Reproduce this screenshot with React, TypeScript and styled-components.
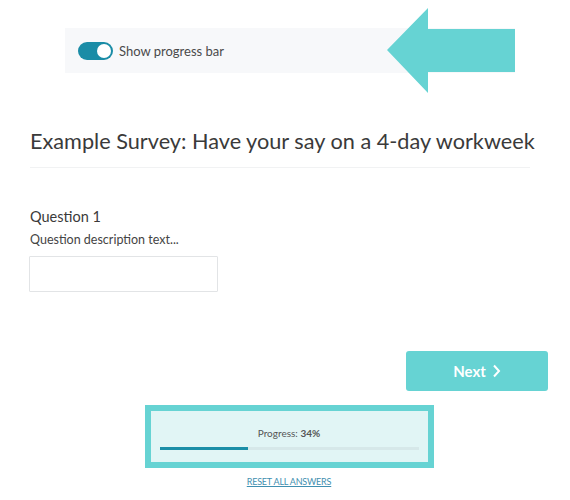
import React, { useState } from 'react';
import styled, { createGlobalStyle } from 'styled-components';

const GlobalStyle = createGlobalStyle`
  body {
    margin: 0;
    background: #ffffff;
    font-family: Lato, 'Open Sans', sans-serif;
    color: #3b3b3b;
  }
`;

const Page = styled.div`
  position: relative;
  width: 570px;
  height: 500px;
  padding: 28px 22px 0 30px;
  box-sizing: border-box;
  display: flex;
  flex-direction: column;
`;

const SettingsBar = styled.div`
  margin-left: 35px;
  width: 450px;
  height: 45px;
  background: #f7f8fa;
  display: flex;
  align-items: center;
  gap: 6px;
  padding-left: 13px;
  box-sizing: border-box;
  font-size: 13px;
  color: #4a4a4a;
`;

const Switch = styled.button<{ $on: boolean }>`
  position: relative;
  width: 35px;
  height: 18px;
  border: none;
  padding: 0;
  border-radius: 9px;
  background: ${(p) => (p.$on ? '#1a8ca6' : '#c9cfd4')};
  cursor: pointer;
  &::after {
    content: '';
    position: absolute;
    top: 2px;
    left: ${(p) => (p.$on ? '19px' : '2px')};
    width: 14px;
    height: 14px;
    border-radius: 50%;
    background: #ffffff;
  }
`;

const Pointer = styled.svg`
  position: absolute;
  left: 387px;
  top: 8px;
`;

const Title = styled.h1`
  margin: 55px 0 0;
  padding-bottom: 13px;
  width: 500px;
  border-bottom: 1px solid #f1f2f3;
  font-size: 21.7px;
  font-weight: 400;
  line-height: 26px;
  white-space: nowrap;
  color: #3a3a3a;
`;

const Question = styled.div`
  margin-top: 40px;
  display: flex;
  flex-direction: column;
`;

const QuestionLabel = styled.div`
  font-size: 14.5px;
  line-height: 18px;
  color: #3a3a3a;
`;

const QuestionHint = styled.div`
  margin-top: 6px;
  font-size: 12.5px;
  line-height: 15px;
  color: #444444;
`;

const AnswerInput = styled.input`
  margin: 9px 0 0 -1px;
  width: 189px;
  height: 36px;
  box-sizing: border-box;
  border: 1px solid #e2e4e6;
  border-radius: 1px;
  font-family: inherit;
  font-size: 13px;
  padding: 0 8px;
  outline: none;
`;

const Actions = styled.div`
  margin-top: 59px;
  display: flex;
  justify-content: flex-end;
`;

const NextButton = styled.button`
  width: 142px;
  height: 40px;
  border: none;
  border-radius: 3px;
  background: #66d3d3;
  color: #ffffff;
  font-family: inherit;
  font-size: 15px;
  font-weight: 700;
  display: flex;
  align-items: center;
  justify-content: center;
  gap: 6px;
  cursor: pointer;
`;

const Footer = styled.div`
  margin-top: 14px;
  display: flex;
  flex-direction: column;
  align-items: center;
`;

const ProgressBox = styled.div`
  width: 289px;
  height: 63px;
  box-sizing: border-box;
  border: 6px solid #66d3d3;
  background: #e1f5f5;
  display: flex;
  flex-direction: column;
  align-items: center;
  padding: 16px 10px 0;
`;

const ProgressText = styled.div`
  font-size: 10px;
  line-height: 12px;
  color: #555555;
  b {
    font-weight: 700;
  }
`;

const Track = styled.div`
  margin-top: 8px;
  width: 259px;
  height: 3px;
  background: #d6e8e9;
`;

const Fill = styled.div`
  height: 100%;
  background: #1b8ea7;
`;

const ResetLink = styled.a`
  margin-top: 8px;
  font-size: 9px;
  line-height: 11px;
  color: #3f8fb0;
  text-decoration: underline;
  letter-spacing: -0.2px;
  cursor: pointer;
`;

const progress = 34;

export default function App() {
  const [showProgress, setShowProgress] = useState(true);
  const [answer, setAnswer] = useState('');

  return (
    <>
      <GlobalStyle />
      <Page>
        <SettingsBar>
          <Switch
            $on={showProgress}
            aria-label="Show progress bar"
            onClick={() => setShowProgress(!showProgress)}
          />
          <span>Show progress bar</span>
        </SettingsBar>
        <Pointer width="128" height="85" viewBox="0 0 128 85">
          <polygon points="0,42 41,0 41,21 128,21 128,64 41,64 41,85" fill="#66d3d3" />
        </Pointer>

        <Title>Example Survey: Have your say on a 4-day workweek</Title>

        <Question>
          <QuestionLabel>Question 1</QuestionLabel>
          <QuestionHint>Question description text...</QuestionHint>
          <AnswerInput value={answer} onChange={(e) => setAnswer(e.target.value)} />
        </Question>

        <Actions>
          <NextButton>
            Next
            <svg width="9" height="14" viewBox="0 0 9 14">
              <path d="M2 1.5 L7 7 L2 12.5" fill="none" stroke="#ffffff" strokeWidth="2" />
            </svg>
          </NextButton>
        </Actions>

        {showProgress && (
          <Footer>
            <ProgressBox>
              <ProgressText>
                Progress: <b>{progress}%</b>
              </ProgressText>
              <Track>
                <Fill style={{ width: `${progress}%` }} />
              </Track>
            </ProgressBox>
            <ResetLink>RESET ALL ANSWERS</ResetLink>
          </Footer>
        )}
      </Page>
    </>
  );
}
